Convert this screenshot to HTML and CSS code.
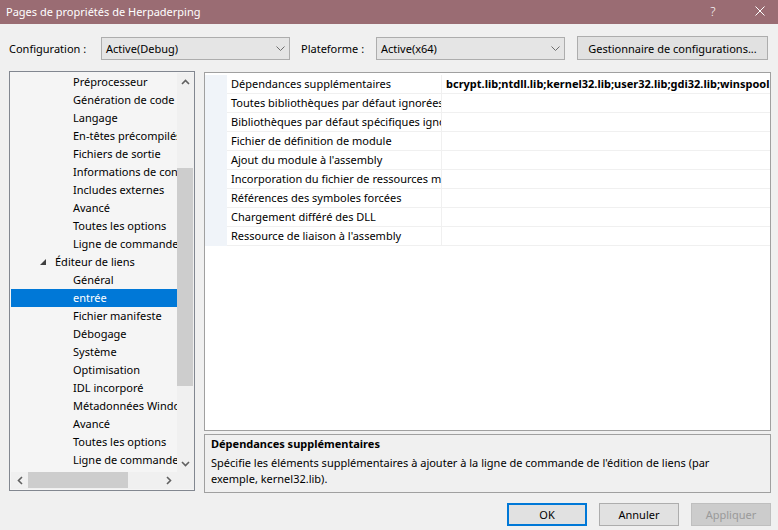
FILE: index.html
```html
<!DOCTYPE html>
<html lang="fr">
<head>
<meta charset="utf-8">
<title>Pages de propriétés de Herpaderping</title>
<link rel="stylesheet" href="styles.css">
</head>
<body>
<div class="window">
  <div class="titlebar">
    <span class="title">Pages de propriétés de Herpaderping</span>
    <span class="help">?</span>
    <span class="close"><svg width="10" height="10" viewBox="0 0 10 10"><path d="M0.5 0.5 L9.5 9.5 M9.5 0.5 L0.5 9.5" stroke="#fff" stroke-width="1" fill="none"/></svg></span>
  </div>

  <div class="toolbar">
    <span class="lbl lbl-config">Configuration :</span>
    <div class="combo combo-config"><span class="combo-text">Active(Debug)</span><svg class="chev" width="9" height="5" viewBox="0 0 9 5"><path d="M0.5 0.5 L4.5 4.5 L8.5 0.5" stroke="#6d6d6d" stroke-width="1" fill="none"/></svg></div>
    <span class="lbl lbl-plat">Plateforme :</span>
    <div class="combo combo-plat"><span class="combo-text">Active(x64)</span><svg class="chev" width="9" height="5" viewBox="0 0 9 5"><path d="M0.5 0.5 L4.5 4.5 L8.5 0.5" stroke="#6d6d6d" stroke-width="1" fill="none"/></svg></div>
    <button class="btn btn-manager">Gestionnaire de configurations...</button>
  </div>

  <div class="main">
    <div class="tree">
      <div class="tree-body">
        <ul class="tree-list">
          <li class="item">Préprocesseur</li>
          <li class="item">Génération de code</li>
          <li class="item">Langage</li>
          <li class="item">En-têtes précompilés</li>
          <li class="item">Fichiers de sortie</li>
          <li class="item">Informations de consultation</li>
          <li class="item">Includes externes</li>
          <li class="item">Avancé</li>
          <li class="item">Toutes les options</li>
          <li class="item">Ligne de commande</li>
          <li class="item group"><svg class="tri" width="6" height="6" viewBox="0 0 6 6"><path d="M6 0 L6 6 L0 6 Z" fill="#404040"/></svg>Éditeur de liens</li>
          <li class="item">Général</li>
          <li class="item selected">entrée</li>
          <li class="item">Fichier manifeste</li>
          <li class="item">Débogage</li>
          <li class="item">Système</li>
          <li class="item">Optimisation</li>
          <li class="item">IDL incorporé</li>
          <li class="item">Métadonnées Windows</li>
          <li class="item">Avancé</li>
          <li class="item">Toutes les options</li>
          <li class="item">Ligne de commande</li>
        </ul>
        <div class="vscroll">
          <div class="sb-btn"><svg width="9" height="6" viewBox="0 0 9 6"><path d="M1 5 L4.5 1.5 L8 5" stroke="#606060" stroke-width="1.6" fill="none"/></svg></div>
          <div class="sb-track"><div class="sb-thumb v-thumb"></div></div>
          <div class="sb-btn"><svg width="9" height="6" viewBox="0 0 9 6"><path d="M1 1 L4.5 4.5 L8 1" stroke="#606060" stroke-width="1.6" fill="none"/></svg></div>
        </div>
      </div>
      <div class="hscroll-row">
        <div class="hscroll">
          <div class="sb-btn"><svg width="6" height="9" viewBox="0 0 6 9"><path d="M5 1 L1.5 4.5 L5 8" stroke="#606060" stroke-width="1.6" fill="none"/></svg></div>
          <div class="sb-track h-track"><div class="sb-thumb h-thumb"></div></div>
          <div class="sb-btn"><svg width="6" height="9" viewBox="0 0 6 9"><path d="M1 1 L4.5 4.5 L1 8" stroke="#606060" stroke-width="1.6" fill="none"/></svg></div>
        </div>
        <div class="corner"></div>
      </div>
    </div>

    <div class="right">
      <div class="grid">
        <div class="grid-inner">
          <div class="gutter"></div>
          <div class="rows">
            <div class="row"><div class="name">Dépendances supplémentaires</div><div class="value">bcrypt.lib;ntdll.lib;kernel32.lib;user32.lib;gdi32.lib;winspool.lib;comdlg32.lib;advapi32.lib</div></div>
            <div class="row"><div class="name">Toutes bibliothèques par défaut ignorées</div><div class="value"></div></div>
            <div class="row"><div class="name">Bibliothèques par défaut spécifiques ignorées</div><div class="value"></div></div>
            <div class="row"><div class="name">Fichier de définition de module</div><div class="value"></div></div>
            <div class="row"><div class="name">Ajout du module à l'assembly</div><div class="value"></div></div>
            <div class="row"><div class="name">Incorporation du fichier de ressources managées</div><div class="value"></div></div>
            <div class="row"><div class="name">Références des symboles forcées</div><div class="value"></div></div>
            <div class="row"><div class="name">Chargement différé des DLL</div><div class="value"></div></div>
            <div class="row"><div class="name">Ressource de liaison à l'assembly</div><div class="value"></div></div>
          </div>
        </div>
      </div>
      <div class="desc">
        <div class="desc-title">Dépendances supplémentaires</div>
        <p class="desc-text">Spécifie les éléments supplémentaires à ajouter à la ligne de commande de l'édition de liens (par<br>exemple, kernel32.lib).</p>
      </div>
    </div>
  </div>

  <div class="footer">
    <button class="btn fbtn ok">OK</button>
    <button class="btn fbtn">Annuler</button>
    <button class="btn fbtn disabled" disabled>Appliquer</button>
  </div>
</div>
</body>
</html>
```

FILE: styles.css
```css
* { box-sizing: border-box; }
html, body { margin: 0; padding: 0; }
body {
  width: 778px;
  height: 530px;
  overflow: hidden;
  background: #f0f0f0;
  font-family: "Noto Sans", "Segoe UI", sans-serif;
  font-size: 11px;
  color: #000;
}
.window { display: flex; flex-direction: column; height: 530px; }

/* title bar */
.titlebar {
  flex: none;
  height: 24px;
  background: #9a6c73;
  color: #fff;
  display: flex;
  align-items: center;
  padding-left: 6px;
  padding-bottom: 2px;
}
.title { flex: 1; font-size: 11px; }
.help { width: 10px; text-align: center; font-size: 12.5px; font-weight: 300; margin-right: 37px; }
.close { width: 10px; height: 10px; display: flex; margin-right: 13px; }

/* toolbar */
.toolbar {
  flex: none;
  display: flex;
  align-items: center;
  height: 24px;
  margin-top: 12px;
  padding-left: 9px;
}
.lbl { white-space: nowrap; }
.lbl-config { width: 92px; }
.lbl-plat { width: 75px; margin-left: 11px; }
.combo {
  width: 189px;
  height: 23px;
  border: 1px solid #adadad;
  background: #e5e5e5;
  display: flex;
  align-items: center;
  padding: 0 4px 0 4px;
}
.combo-text { flex: 1; white-space: nowrap; }
.chev { display: block; }
.btn {
  font-family: inherit;
  font-size: inherit;
  color: #000;
  background: #e1e1e1;
  border: 1px solid #adadad;
  padding: 0;
  margin: 0;
  white-space: nowrap;
}
.btn-manager { width: 191px; height: 24px; margin-left: 12px; }

/* main */
.main {
  flex: none;
  display: flex;
  align-items: flex-start;
  height: 422px;
  margin-top: 11px;
  padding-left: 9px;
}

/* tree */
.tree {
  width: 186px;
  height: 420px;
  border: 1px solid #828790;
  background: #f5f5f5;
  padding: 1px 0 1px 1px;
  display: flex;
  flex-direction: column;
}
.tree-body { display: flex; height: 399px; }
.tree-list {
  list-style: none;
  margin: 0;
  padding: 0;
  width: 166px;
  overflow: hidden;
}
.item {
  height: 18px;
  line-height: 18px;
  white-space: nowrap;
  overflow: hidden;
  padding-left: 62px;
}
.item.group { padding-left: 29px; display: flex; align-items: center; }
.tri { margin-right: 9px; flex: none; }
.item.selected { background: #0078d7; color: #fff; }

.vscroll {
  width: 17px;
  display: flex;
  flex-direction: column;
  background: #f0f0f0;
}
.sb-btn {
  width: 17px;
  height: 17px;
  flex: none;
  display: flex;
  align-items: center;
  justify-content: center;
}
.sb-track { flex: 1; }
.sb-thumb { background: #cdcdcd; }
.v-thumb { margin-top: 78px; height: 218px; width: 16px; }

.hscroll-row { display: flex; height: 17px; }
.hscroll { width: 166px; display: flex; background: #f0f0f0; }
.h-track { display: flex; }
.h-thumb { width: 100px; height: 16px; }
.corner { width: 17px; background: #f0f0f0; }

/* right column */
.right {
  margin-left: 9px;
  margin-top: 1px;
  width: 567px;
  display: flex;
  flex-direction: column;
}
.grid {
  height: 359px;
  border: 1px solid #a0a0a0;
  background: #fff;
  padding-top: 2px;
  overflow: hidden;
}
.grid-inner { display: flex; }
.gutter { width: 22px; flex: none; background: #f0f4f9; }
.rows { flex: 1; min-width: 0; }
.row {
  display: flex;
  height: 19px;
  border-bottom: 1px solid #f0f0f0;
}
.name {
  width: 215px;
  flex: none;
  padding-left: 4px;
  line-height: 18px;
  border-right: 1px solid #f0f0f0;
  white-space: nowrap;
  overflow: hidden;
}
.value {
  flex: 1;
  min-width: 0;
  padding-left: 4px;
  line-height: 18px;
  font-weight: bold;
  white-space: nowrap;
  overflow: hidden;
}

.desc {
  margin-top: 3px;
  height: 59px;
  border: 1px solid #a0a0a0;
  background: #f0f0f0;
  padding: 1px 6px 0 6px;
}
.desc-title { font-weight: bold; line-height: 16px; }
.desc-text { margin: 3px 0 0 0; line-height: 16px; }

/* footer */
.footer {
  flex: none;
  display: flex;
  justify-content: flex-end;
  gap: 12px;
  margin-top: 10px;
  padding-right: 7px;
}
.fbtn { width: 80px; height: 23px; }
.fbtn.ok { border: 2px solid #0078d7; }
.fbtn.disabled { background: #cccccc; border-color: #bfbfbf; color: #9a9a9a; }
```
